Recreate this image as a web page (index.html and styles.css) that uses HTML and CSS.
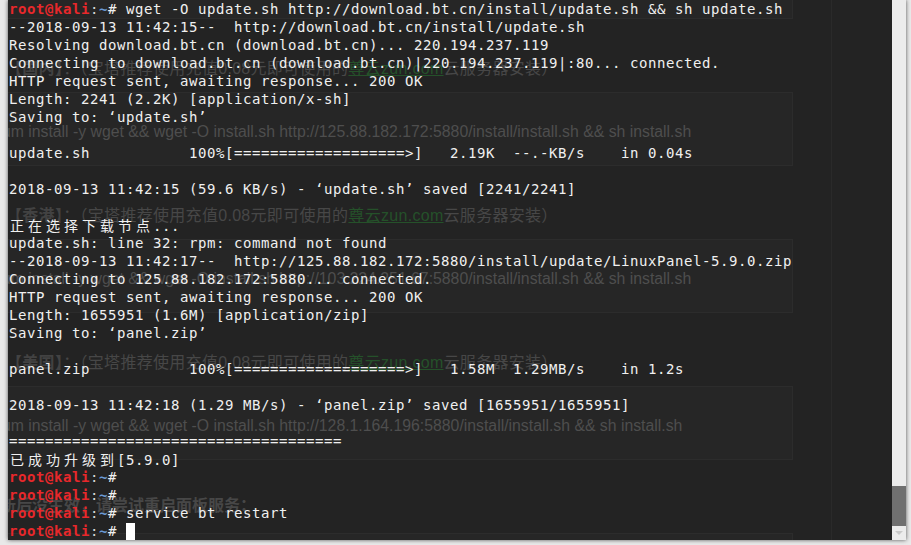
FILE: index.html
```html
<!DOCTYPE html>
<html lang="zh-CN">
<head>
<meta charset="utf-8">
<title>Terminal</title>
<link rel="stylesheet" href="styles.css">
</head>
<body>
<div class="window">
  <div class="term">
    <div class="ghost">
      <div class="code first"></div>
      <div class="h"><b>【国内】</b>：（宝塔推荐使用充值0.08元即可使用的<a>尊云zun.com</a>云服务器安装）</div>
      <div class="code">yum install -y wget &amp;&amp; wget -O install.sh http://125.88.182.172:5880/install/install.sh &amp;&amp; sh install.sh</div>
      <div class="h"><b>【香港】</b>：（宝塔推荐使用充值0.08元即可使用的<a>尊云zun.com</a>云服务器安装）</div>
      <div class="code">yum install -y wget &amp;&amp; wget -O install.sh http://103.224.251.67:5880/install/install.sh &amp;&amp; sh install.sh</div>
      <div class="h"><b>【美国】</b>：（宝塔推荐使用充值0.08元即可使用的<a>尊云zun.com</a>云服务器安装）</div>
      <div class="code">yum install -y wget &amp;&amp; wget -O install.sh http://128.1.164.196:5880/install/install.sh &amp;&amp; sh install.sh</div>
      <div class="h bold">更新后没生效，请尝试重启面板服务：</div>
      <div class="code last">service bt restart</div>
    </div>
    <div class="lines">
      <div class="row"><span class="p">root@kali</span><span class="c">:</span><span class="t">~</span># wget -O update.sh http://download.bt.cn/install/update.sh &amp;&amp; sh update.sh</div>
      <div class="row">--2018-09-13 11:42:15--  http://download.bt.cn/install/update.sh</div>
      <div class="row">Resolving download.bt.cn (download.bt.cn)... 220.194.237.119</div>
      <div class="row">Connecting to download.bt.cn (download.bt.cn)|220.194.237.119|:80... connected.</div>
      <div class="row">HTTP request sent, awaiting response... 200 OK</div>
      <div class="row">Length: 2241 (2.2K) [application/x-sh]</div>
      <div class="row">Saving to: ‘update.sh’</div>
      <div class="row"></div>
      <div class="row">update.sh           100%[===================&gt;]   2.19K  --.-KB/s    in 0.04s</div>
      <div class="row"></div>
      <div class="row">2018-09-13 11:42:15 (59.6 KB/s) - ‘update.sh’ saved [2241/2241]</div>
      <div class="row"></div>
      <div class="row"><span class="w">正</span><span class="w">在</span><span class="w">选</span><span class="w">择</span><span class="w">下</span><span class="w">载</span><span class="w">节</span><span class="w">点</span>...</div>
      <div class="row">update.sh: line 32: rpm: command not found</div>
      <div class="row">--2018-09-13 11:42:17--  http://125.88.182.172:5880/install/update/LinuxPanel-5.9.0.zip</div>
      <div class="row">Connecting to 125.88.182.172:5880... connected.</div>
      <div class="row">HTTP request sent, awaiting response... 200 OK</div>
      <div class="row">Length: 1655951 (1.6M) [application/zip]</div>
      <div class="row">Saving to: ‘panel.zip’</div>
      <div class="row"></div>
      <div class="row">panel.zip           100%[===================&gt;]   1.58M  1.29MB/s    in 1.2s</div>
      <div class="row"></div>
      <div class="row">2018-09-13 11:42:18 (1.29 MB/s) - ‘panel.zip’ saved [1655951/1655951]</div>
      <div class="row"></div>
      <div class="row">=====================================</div>
      <div class="row"><span class="w">已</span><span class="w">成</span><span class="w">功</span><span class="w">升</span><span class="w">级</span><span class="w">到</span>[5.9.0]</div>
      <div class="row"><span class="p">root@kali</span><span class="c">:</span><span class="t">~</span>#</div>
      <div class="row"><span class="p">root@kali</span><span class="c">:</span><span class="t">~</span>#</div>
      <div class="row"><span class="p">root@kali</span><span class="c">:</span><span class="t">~</span># service bt restart</div>
      <div class="row"><span class="p">root@kali</span><span class="c">:</span><span class="t">~</span># <span class="cur"></span></div>
    </div>
  </div>
  <div class="scrollbar">
    <div class="track"></div>
    <div class="thumb"></div>
    <div class="arrow"><span class="tri"></span></div>
  </div>
</div>
</body>
</html>
```

FILE: styles.css
```css
html, body {
  margin: 0;
  padding: 0;
}
body {
  background: #e9e9e9;
  width: 911px;
  height: 545px;
  overflow: hidden;
}
.window {
  margin-left: 8px;
  width: 898px;
  height: 540px;
  display: flex;
  box-shadow: 0 0 4px rgba(0, 0, 0, 0.65);
}
.term {
  flex: 1;
  position: relative;
  overflow: hidden;
  background: #232323;
}
.ghost {
  display: flow-root;
  margin-left: -16px;
  width: 839px;
  height: 100%;
  border-right: 1px solid #2a2a2a;
  font-family: "Liberation Sans", "Noto Sans CJK SC", sans-serif;
  font-size: 16px;
  line-height: 24px;
}
.code {
  width: 801px;
  height: 74px;
  box-sizing: border-box;
  border: 1px solid #2c2c2c;
  background: #262626;
  padding-top: 27px;
  padding-left: 1px;
  font-size: 15.8px;
  color: #4e4e4e;
  white-space: nowrap;
}
.code.first {
  margin-top: -55px;
}
.h {
  margin: 38px 0 11px;
  padding-left: 14px;
  color: #474747;
  white-space: nowrap;
  letter-spacing: 0.3px;
}
.h b {
  font-weight: bold;
  color: #424242;
}
.h a {
  color: #25512a;
  text-decoration: underline;
}
.h.bold {
  font-weight: bold;
  margin-top: 34px;
  margin-bottom: 15px;
  padding-left: 0;
  text-indent: -8px;
  letter-spacing: 0;
}
.code.last {
  color: transparent;
}
.lines {
  position: absolute;
  inset: 0;
  padding-left: 1px;
  font-family: "DejaVu Sans Mono", monospace;
  font-size: 14px;
  letter-spacing: 0.57px;
  color: #f0f0f0;
}
.row {
  height: 18px;
  line-height: 18px;
  white-space: pre;
}
.p {
  color: #e8282b;
  font-weight: bold;
}
.c {
  color: #d8d8d8;
}
.t {
  color: #6b9ad6;
  font-weight: bold;
}
.w {
  display: inline-block;
  width: 18px;
  letter-spacing: 0;
  font-family: "Noto Sans CJK SC", sans-serif;
  font-size: 14px;
  padding-left: 1px;
  box-sizing: border-box;
}
.cur {
  display: inline-block;
  width: 9px;
  height: 17px;
  background: #ffffff;
  vertical-align: -4px;
}
.scrollbar {
  width: 14px;
  display: flex;
  flex-direction: column;
  background: #ececec;
}
.track {
  flex: 1;
}
.thumb {
  height: 40px;
  background: #707070;
}
.arrow {
  height: 14px;
  display: flex;
  align-items: center;
  justify-content: center;
}
.tri {
  width: 0;
  height: 0;
  border-left: 4px solid transparent;
  border-right: 4px solid transparent;
  border-top: 4px solid #c9c9c9;
}
```
